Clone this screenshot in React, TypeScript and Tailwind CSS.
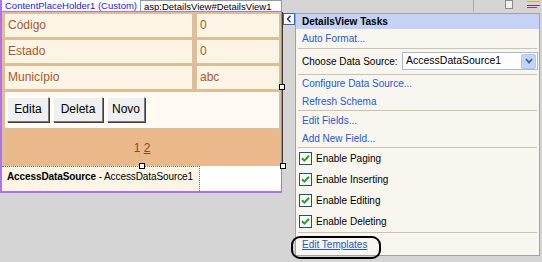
import React from "react"

const label = "text-[#a65a2e] text-[12px] leading-[23px] pl-[3px]"

function Check() {
  return (
    <span className="flex items-center justify-center w-[13px] h-[13px] border border-[#1c5180] bg-white shrink-0">
      <svg width="9" height="9" viewBox="0 0 9 9">
        <path d="M1 4.2 L3.4 6.6 L8 1.8" stroke="#21a121" strokeWidth="2" fill="none" />
      </svg>
    </span>
  )
}

function Link({ text, h, under }: { text: string; h: string; under?: boolean }) {
  return (
    <div className={`${h} flex items-center pl-[6px] text-[#2358d6] whitespace-nowrap ${under ? "underline" : ""}`}>{text}</div>
  )
}

function Box({ text, h }: { text: string; h: string }) {
  return (
    <div className={`${h} flex items-center gap-[4px] pl-[3px] text-black whitespace-nowrap`}>
      <Check />
      <span>{text}</span>
    </div>
  )
}

const Divider = () => <div className="h-px mx-[2px] bg-[#c9c1b2]" />

export default function App() {
  return (
    <div className="relative w-[542px] h-[262px] overflow-hidden bg-[#d5d5d5] font-['Liberation_Sans',Arial,sans-serif] flex items-start">
      {/* designer surface */}
      <div className="w-[283px] flex flex-col">
        <div className="flex h-[11px] text-[9.5px] leading-[11px] whitespace-nowrap">
          <div className="w-[141px] bg-white border-l-2 border-[#b46ef0] pl-[3px] text-[#1a1ae0] border-r border-r-[#8aa0d0]">ContentPlaceHolder1 (Custom)</div>
          <div className="w-[141px] bg-white border-t border-r border-[#9a9a9a] pl-[3px] text-black">asp:DetailsView#DetailsView1</div>
        </div>
        <div className="w-[282px] h-[182px] border-t border-l-2 border-r border-b-2 border-[#b46ef0] bg-white flex flex-col">
          <div className="grid grid-cols-[187px_1fr] gap-x-[5px] gap-y-[3px] bg-[#dcbf98] pt-[2px] pl-[3px] pr-[2px] pb-px">
            <div className={`${label} bg-[#fcf4e4]`}>Código</div>
            <div className={`${label} bg-[#fcf4e4]`}>0</div>
            <div className={`${label} bg-[#fcf4e4]`}>Estado</div>
            <div className={`${label} bg-[#fcf4e4]`}>0</div>
            <div className={`${label} bg-[#fcf4e4]`}>Município</div>
            <div className={`${label} bg-[#fcf4e4]`}>abc</div>
            <div className="col-span-2 h-[36px] bg-[#fffaf3] flex items-center gap-[4px] pl-[2px] pb-[2px] text-[12px] text-black">
              {[["Edita", "w-[42px]"], ["Deleta", "w-[50px]"], ["Novo", "w-[38px]"]].map(([t, w]) => (
                <span key={t} className={`${w} h-[25px] flex items-center justify-center bg-[#efefef] border border-t-white border-l-white border-r-[#7a7a7a] border-b-[#7a7a7a] shadow-[1px_1px_0_#3c3c3c]`}>{t}</span>
              ))}
            </div>
            <div className="col-span-2 h-[35px] mt-[-1px] bg-[#e9b98c] flex items-center justify-center text-[12px] text-[#8b4a20]">
              1&nbsp;<span className="underline">2</span>
            </div>
          </div>
          <div className="flex flex-1">
            <div className="w-[198px] bg-[#fbf5e6] border-t border-dotted border-[#707070] border-r text-[10px] tracking-[-0.1px] pl-[5px] pt-[2px] text-black whitespace-nowrap overflow-hidden">
              <b>AccessDataSource</b> - AccessDataSource1
            </div>
            <div className="flex-1 bg-white" />
          </div>
        </div>
      </div>

      {/* smart tag chevron */}
      <div className="mt-[13px] w-[12px] h-[12px] bg-white border border-[#3a62b8] flex items-center justify-center">
        <svg width="6" height="8" viewBox="0 0 6 8"><path d="M4.5 0.8 L1.5 4 L4.5 7.2" stroke="#203a80" strokeWidth="1.4" fill="none" /></svg>
      </div>

      {/* tasks panel */}
      <div className="mt-[13px] w-[245px] h-[243px] border border-[#a3a3a3] bg-[#f8f6ee] text-[10px] flex flex-col">
        <div className="h-[15px] bg-[#c4d2f5] pl-[6px] font-bold text-black leading-[15px] text-[10px] whitespace-nowrap">DetailsView Tasks</div>
        <Link text="Auto Format..." h="h-[19px]" />
        <Divider />
        <div className="h-[25px] flex items-center pl-[6px] text-black whitespace-nowrap">
          <span className="w-[100px] shrink-0">Choose Data Source:</span>
          <div className="w-[136px] h-[18px] bg-white border border-[#a5b9dc] flex items-center pl-[3px] text-[10.5px]">
            <span className="flex-1">AccessDataSource1</span>
            <span className="w-[15px] h-[15px] mr-px rounded-[2px] bg-[#c2d4f8] border border-[#b3c6ee] flex items-center justify-center">
              <svg width="8" height="6" viewBox="0 0 8 6"><path d="M1 1 L4 4.5 L7 1" stroke="#4c5f86" strokeWidth="1.8" fill="none" /></svg>
            </span>
          </div>
        </div>
        <Divider />
        <Link text="Configure Data Source..." h="h-[18px]" />
        <Link text="Refresh Schema" h="h-[18px]" />
        <Divider />
        <Link text="Edit Fields..." h="h-[18px]" />
        <Link text="Add New Field..." h="h-[18px]" />
        <Divider />
        <Box text="Enable Paging" h="h-[21px]" />
        <Box text="Enable Inserting" h="h-[21px]" />
        <Box text="Enable Editing" h="h-[22px]" />
        <Box text="Enable Deleting" h="h-[21px]" />
        <Divider />
        <Link text="Edit Templates" h="h-[22px]" under />
      </div>

      {/* selection outline and handles */}
      <div className="absolute left-[282px] top-[12px] w-px h-[154px] bg-[#3a3a3a]" />
      <div className="absolute left-[139px] top-[163px] w-[6px] h-[6px] bg-white border border-black" />
      <div className="absolute left-[280px] top-[163px] w-[6px] h-[6px] bg-white border border-black" />
      <div className="absolute left-[279px] top-[84px] w-[6px] h-[6px] bg-white border border-black" />

      {/* annotation */}
      <div className="absolute left-[291px] top-[236px] w-[90px] h-[23px] border-2 border-black rounded-[9px]" />

      {/* background fragments */}
      <div className="absolute left-[473px] top-0 w-px h-[12px] bg-[#8ab0e0]" />
      <div className="absolute left-[505px] top-0 w-[8px] h-[9px] border border-[#8a8a8a] bg-[#f0f0f0]" />
      <div className="absolute left-[527px] top-[1px] w-[13px] h-px bg-[#e0b020]" />
      <div className="absolute left-[527px] top-[5px] w-[13px] h-px bg-[#3050c0]" />
      <div className="absolute left-[527px] top-[7px] w-[10px] h-px bg-[#c03030]" />
    </div>
  )
}
